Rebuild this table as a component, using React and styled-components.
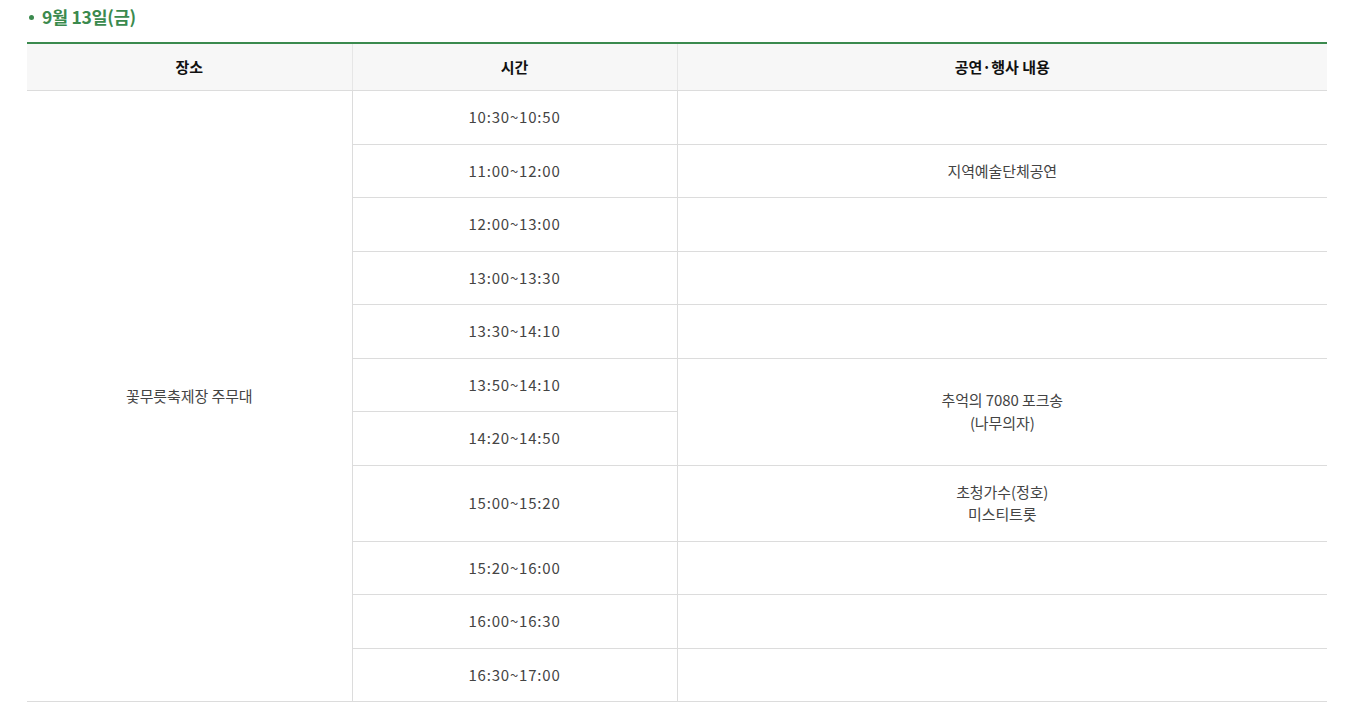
import styled, { createGlobalStyle } from "styled-components";

const GlobalStyle = createGlobalStyle`
  body {
    margin: 0;
    background: #fff;
    font-family: "Noto Sans CJK KR", "Noto Sans", sans-serif;
  }
`;

const schedule = [
  { time: "10:30~10:50", content: [""] },
  { time: "11:00~12:00", content: ["지역예술단체공연"] },
  { time: "12:00~13:00", content: [""] },
  { time: "13:00~13:30", content: [""] },
  { time: "13:30~14:10", content: [""] },
  { time: "13:50~14:10", content: ["추억의 7080 포크송", "(나무의자)"], span: 2 },
  { time: "14:20~14:50", skip: true },
  { time: "15:00~15:20", content: ["초청가수(정호)", "미스티트롯"] },
  { time: "15:20~16:00", content: [""] },
  { time: "16:00~16:30", content: [""] },
  { time: "16:30~17:00", content: [""] },
];

const App = () => {
  return (
    <Page>
      <GlobalStyle />
      <Title>9월 13일(금)</Title>
      <Table>
        <colgroup>
          <col style={{ width: "25%" }} />
          <col style={{ width: "25%" }} />
          <col style={{ width: "50%" }} />
        </colgroup>
        <thead>
          <tr>
            <Th>장소</Th>
            <Th $divider>시간</Th>
            <Th $divider>공연·행사 내용</Th>
          </tr>
        </thead>
        <tbody>
          {schedule.map((row, index) => (
            <tr key={index}>
              {index === 0 && (
                <Td rowSpan={schedule.length}>꽃무릇축제장 주무대</Td>
              )}
              <Td $divider $time>
                {row.time}
              </Td>
              {!row.skip && (
                <Td $divider rowSpan={row.span || 1}>
                  {row.content.map((line, i) => (
                    <div key={i}>{line}</div>
                  ))}
                </Td>
              )}
            </tr>
          ))}
        </tbody>
      </Table>
    </Page>
  );
};

const Page = styled.div`
  padding: 6px 27px 0;
`;

const Title = styled.h3`
  margin: 0 0 14px;
  padding-left: 15px;
  position: relative;
  font-size: 17.5px;
  line-height: 22px;
  font-weight: 700;
  color: #3b8a4e;
  letter-spacing: -0.3px;

  &::before {
    content: "";
    position: absolute;
    left: 2px;
    top: 9px;
    width: 5px;
    height: 5px;
    border-radius: 50%;
    background: #3b8a4e;
  }
`;

const Table = styled.table`
  width: 100%;
  border-collapse: collapse;
  table-layout: fixed;
  border-top: 2px solid #3b8a4e;
  border-bottom: 1px solid #dcdcdc;
`;

const Th = styled.th`
  background: #f7f7f7;
  padding: 12px 10px;
  line-height: 22px;
  font-size: 15px;
  font-weight: 700;
  color: #111;
  border-bottom: 1px solid #dcdcdc;
  border-left: ${({ $divider }) => ($divider ? "1px solid #e6e6e6" : "none")};
`;

const Td = styled.td`
  padding: 15px 10px;
  line-height: 22.5px;
  font-size: 15px;
  letter-spacing: ${({ $time }) => ($time ? "0.8px" : "-0.1px")};
  color: #444;
  text-align: center;
  vertical-align: middle;
  border-top: 1px solid #dcdcdc;
  border-left: ${({ $divider }) => ($divider ? "1px solid #dcdcdc" : "none")};
`;

export default App;
